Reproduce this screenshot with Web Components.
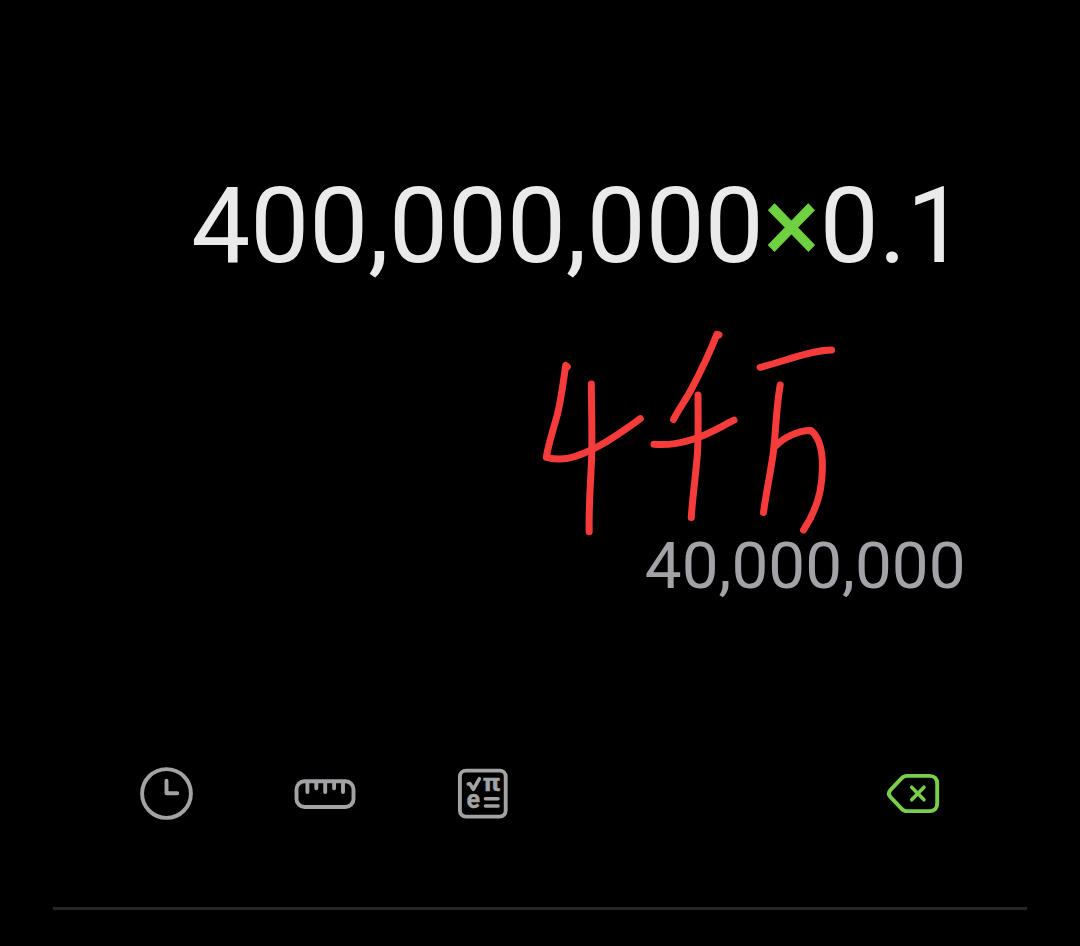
<!DOCTYPE html>
<html lang="zh">
<head>
<meta charset="utf-8">
<title>Calculator</title>
<style>
  body {
    margin: 0;
    background: #000;
    font-family: Roboto, "Noto Sans", sans-serif;
  }
</style>
</head>
<body>
<calc-screen>
  <calc-expression slot="expression">400,000,000<calc-operator>×</calc-operator>0.1</calc-expression>
  <calc-result slot="result">40,000,000</calc-result>
  <hand-note slot="note"></hand-note>
  <calc-toolbar slot="toolbar">
    <tool-icon name="history"></tool-icon>
    <tool-icon name="ruler"></tool-icon>
    <tool-icon name="scientific"></tool-icon>
    <tool-icon name="backspace" slot="end"></tool-icon>
  </calc-toolbar>
</calc-screen>

<script>
class CalcScreen extends HTMLElement {
  constructor() {
    super();
    this.attachShadow({ mode: 'open' }).innerHTML = `
      <style>
        :host {
          display: flex;
          flex-direction: column;
          position: relative;
          box-sizing: border-box;
          width: 1080px;
          height: 946px;
          padding: 167px 53px 36px;
          overflow: hidden;
          background: #000;
        }
        .values {
          display: flex;
          flex-direction: column;
          align-items: flex-end;
          gap: 240px;
          padding-right: 61.5px;
        }
        .bottom {
          margin-top: auto;
          border-bottom: 3px solid #262626;
        }
      </style>
      <div class="values">
        <slot name="expression"></slot>
        <slot name="result"></slot>
      </div>
      <div class="bottom"><slot name="toolbar"></slot></div>
      <slot name="note"></slot>
    `;
  }
}

class CalcExpression extends HTMLElement {
  constructor() {
    super();
    this.attachShadow({ mode: 'open' }).innerHTML = `
      <style>
        :host {
          display: block;
          font-size: 105px;
          line-height: 120px;
          white-space: nowrap;
          color: #eaeaea;
        }
      </style>
      <slot></slot>
    `;
  }
}

class CalcOperator extends HTMLElement {
  constructor() {
    super();
    // no whitespace around the slot, it would show up inside the line
    this.attachShadow({ mode: 'open' }).innerHTML =
      '<style>:host { display: inline; color: #6fd140; -webkit-text-stroke: 0.8px #6fd140; }</style><slot></slot>';
  }
}

class CalcResult extends HTMLElement {
  constructor() {
    super();
    this.attachShadow({ mode: 'open' }).innerHTML = `
      <style>
        :host {
          display: block;
          font-size: 65.6px;
          line-height: 78px;
          white-space: nowrap;
          color: #a3a2a6;
        }
      </style>
      <slot></slot>
    `;
  }
}

// Pen strokes laid over the display
class HandNote extends HTMLElement {
  constructor() {
    super();
    this.attachShadow({ mode: 'open' }).innerHTML = `
      <style>
        :host {
          position: absolute;
          left: 530px;
          top: 320px;
          width: 320px;
          height: 225px;
          pointer-events: none;
        }
        svg {
          display: block;
          fill: none;
          stroke: #f63b3b;
          stroke-width: 7;
          stroke-linecap: round;
          stroke-linejoin: round;
        }
      </style>
      <svg width="320" height="225" viewBox="0 0 320 225">
        <path d="M37.300 46.800L35.700 45.500C33.500 60 31.500 77 28 92C24.300 107 19 121 16.300 137.300C25 139.500 35 140 45 136.500C70 128 90 113 110.300 98.700"/>
        <path d="M61.300 64C61.500 88 62.300 112 61.700 136C60.800 162 58.500 187 59.200 211.700"/>
        <path d="M189 14.900L186.900 14.300C180 32 169.500 54 161 70C155 81 148 90 143.500 99.500"/>
        <path d="M124 124.300C139 125 150 124 168 117.500C181 113 193 105.500 204 100.200"/>
        <path d="M168 75C168 92 168.600 112 167.500 132C166 155 162.500 176 161.300 197.500"/>
        <path d="M230 47.300C250 43 280 30 301.500 30"/>
        <path d="M250.200 65C246 88 246 112 243 135C240 155 236 174 233.500 192.500"/>
        <path d="M245 126.500C253 118 267 110.500 281 110.500C290 118 293 132 292.300 150C292 175 285 193 273.500 210"/>
      </svg>
    `;
  }
}

class CalcToolbar extends HTMLElement {
  constructor() {
    super();
    this.attachShadow({ mode: 'open' }).innerHTML = `
      <style>
        :host {
          display: flex;
          align-items: center;
          justify-content: space-between;
          height: 75px;
          padding: 0 77px 77px;
        }
        .tools {
          display: flex;
          gap: 80px;
        }
      </style>
      <div class="tools"><slot></slot></div>
      <slot name="end"></slot>
    `;
  }
}

const ICONS = {
  history: `
    <circle cx="36.500" cy="38.500" r="24.400"/>
    <path d="M36.500 25.800V38.200H47.300"/>`,
  ruler: `
    <rect x="11.500" y="26.300" width="57" height="25.700" rx="8"/>
    <path d="M22.400 27V37M31.300 27V33.200M40.200 27V37M49.100 27V33.200M58 27V37"/>`,
  scientific: `
    <rect x="14.900" y="15.600" width="45.800" height="46" rx="6"/>
    <path d="M23.300 29L24.800 28.700L28.300 34.300L34.300 23.800" stroke-width="3.700"/>
    <path d="M40.500 43.700H53M40.500 51H53" stroke-width="3.600"/>
    <text x="37.800" y="36.400" font-size="23" textLength="17.500" lengthAdjust="spacingAndGlyphs">π</text>
    <text x="21.500" y="53.400" font-size="25">e</text>`,
  backspace: `
    <path d="M32 20.900H54.500C59.500 20.900 62.200 23.800 62.200 28.500V48.500C62.200 53.200 59.500 56.100 54.500 56.100H32C29.500 56.100 28 55.300 26.500 53.600L15.300 41.800C13.500 39.800 13.500 37.200 15.300 35.200L26.500 23.400C28 21.700 29.500 20.900 32 20.900Z"/>
    <path d="M36.700 32.200L49 44.800M49 32.200L36.700 44.800" stroke-width="3.500"/>`
};

class ToolIcon extends HTMLElement {
  connectedCallback() {
    if (this.shadowRoot) return;
    const name = this.getAttribute('name');
    const width = name === 'ruler' ? 80 : 75;
    this.attachShadow({ mode: 'open' }).innerHTML = `
      <style>
        :host {
          display: block;
          color: #a3a2a5;
        }
        :host([name="backspace"]) {
          color: #79cf4b;
        }
        svg {
          display: block;
          fill: none;
          stroke: currentColor;
          stroke-width: 3.900;
          stroke-linecap: round;
          stroke-linejoin: round;
        }
        text {
          font-family: Roboto, sans-serif;
          font-weight: 700;
          fill: currentColor;
          stroke: currentColor;
          stroke-width: 0.4;
        }
      </style>
      <svg width="${width}" height="75" viewBox="0 0 ${width} 75">${ICONS[name]}</svg>
    `;
  }
}

customElements.define('calc-screen', CalcScreen);
customElements.define('calc-expression', CalcExpression);
customElements.define('calc-operator', CalcOperator);
customElements.define('calc-result', CalcResult);
customElements.define('hand-note', HandNote);
customElements.define('calc-toolbar', CalcToolbar);
customElements.define('tool-icon', ToolIcon);
</script>
</body>
</html>
